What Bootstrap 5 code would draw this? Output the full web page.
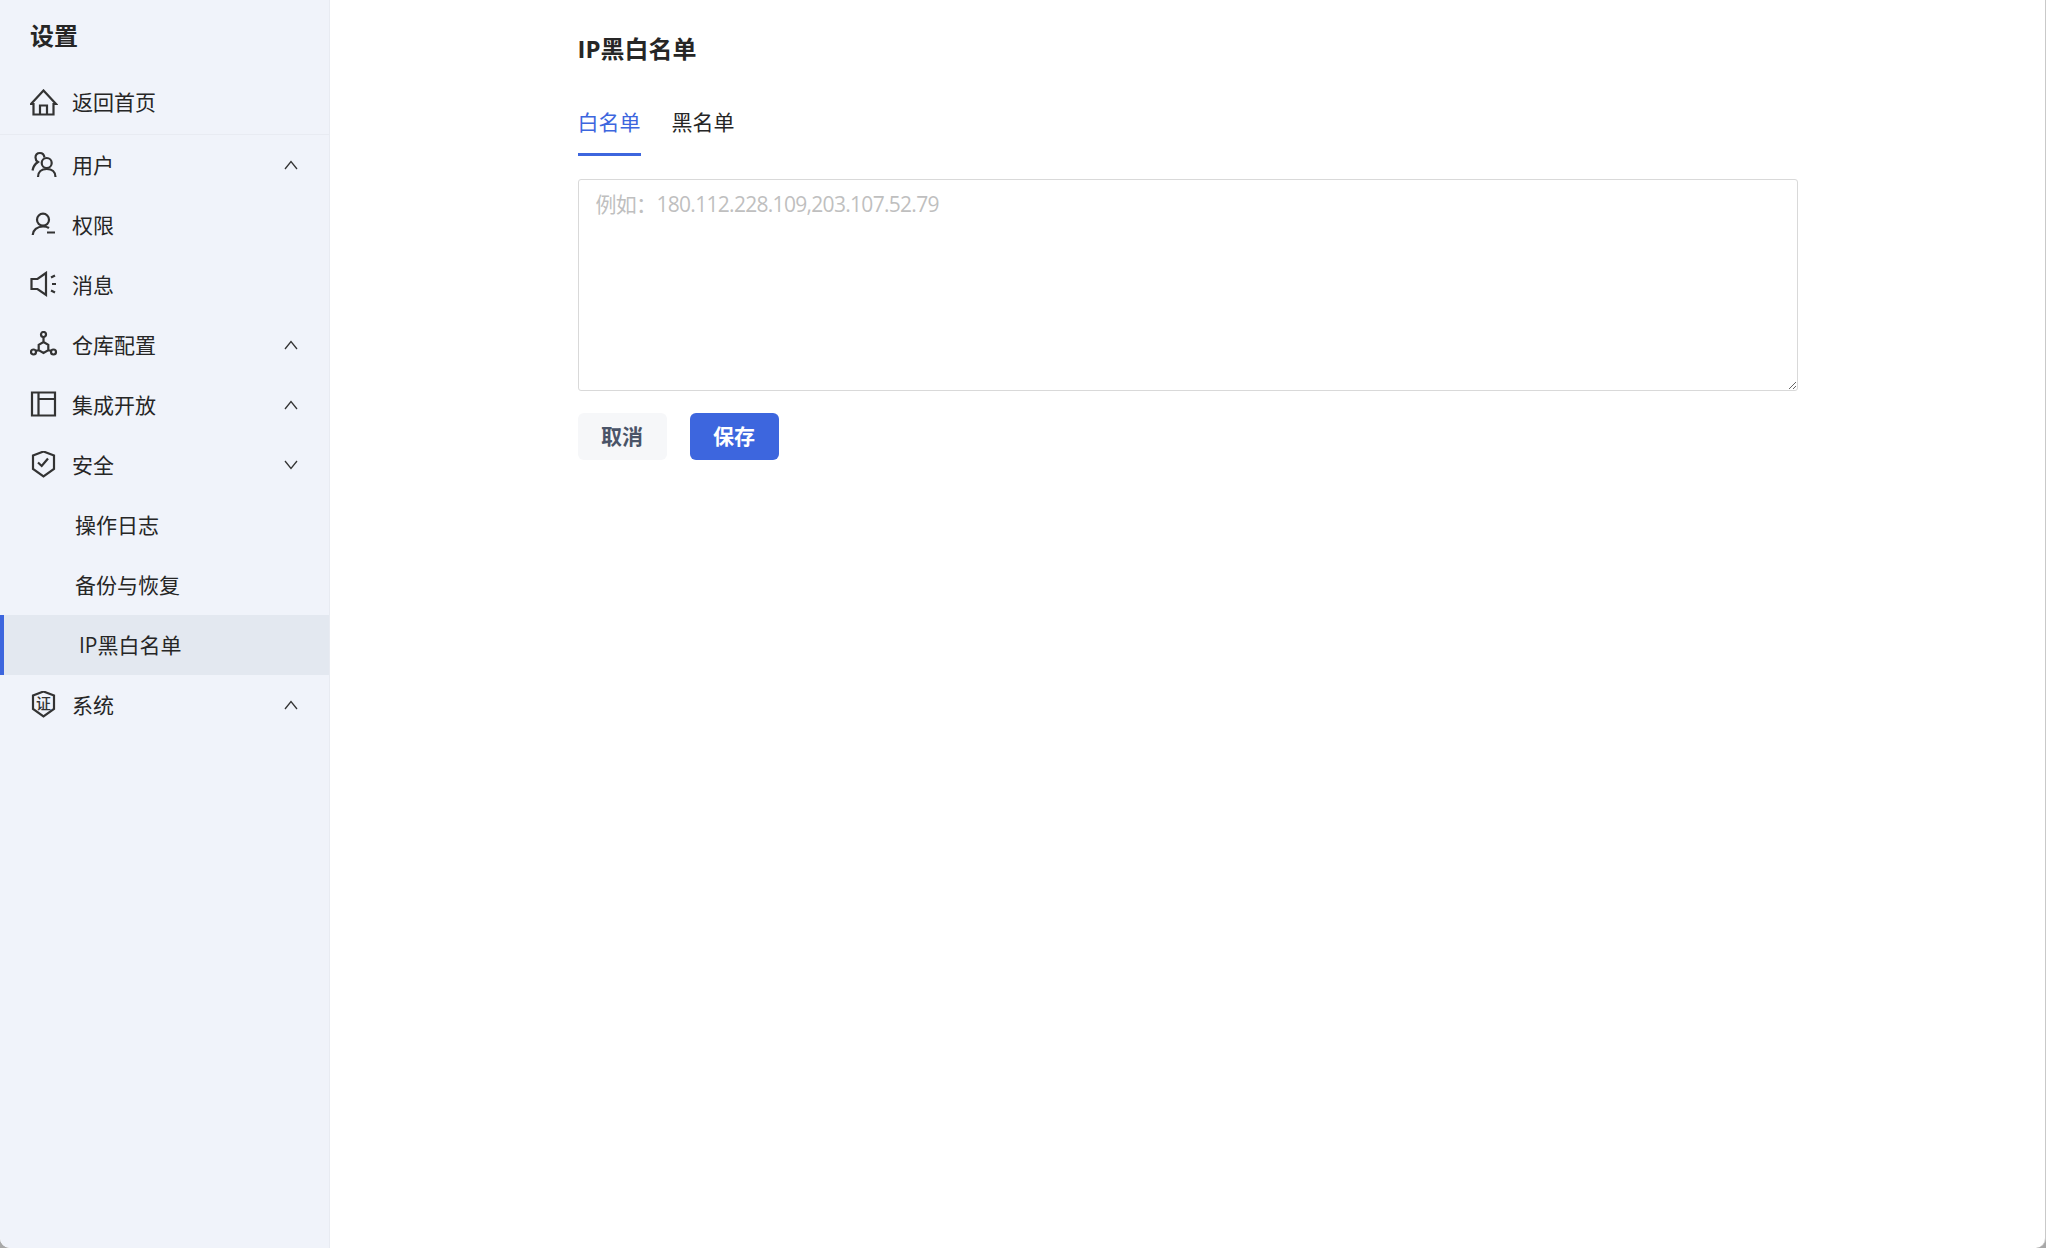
<!DOCTYPE html>
<html lang="zh-CN">
<head>
<meta charset="utf-8">
<title>IP黑白名单</title>
<link href="https://cdn.jsdelivr.net/npm/bootstrap@5.3.0/dist/css/bootstrap.min.css" rel="stylesheet">
<style>
html, body { height: 100%; }
body { background: #a8a8a8; color: #262626; font-family: "Open Sans", "Noto Sans CJK SC", sans-serif; font-size: 21px; overflow: hidden; }
.app-frame { height: 1248px; background: #fff; border-radius: 0 0 10px 10px; overflow: hidden; border-right: 1px solid #c9c9c9; }
.side-pane { width: 330px; background: #f0f3fa; border-right: 1px solid #e8ebf2; flex: none; }
.side-title { font-size: 24px; font-weight: 700; padding: 19px 30px 0; height: 71px; line-height: 34px; }
.side-row { height: 60px; padding-left: 30px; padding-right: 31px; color: #262626; text-decoration: none; gap: 14px; line-height: 1; }
.side-row:hover { color: #262626; }
.side-home { height: 64px; padding-bottom: 0; border-bottom: 1px solid #e8ebf2; }
.side-sub { padding-left: 75px; }
.side-active { background: #e3e8f0; border-left: 4px solid #3d66de; padding-left: 75px; }
.side-icon { width: 28px; height: 28px; flex: none; fill: none; stroke: #333; stroke-width: 2.2; }
.side-icon text { fill: #333; stroke: none; font-size: 15px; font-weight: 500; font-family: "Noto Sans CJK SC", sans-serif; }
.side-chev { width: 14px; height: 10px; flex: none; fill: none; stroke: #333; stroke-width: 1.3; margin-left: auto; margin-top: 0; }
.body-pane { width: 1220px; }
.page-head { font-size: 24px; font-weight: 700; line-height: 34px; margin: 32px 0 0; color: #262626; }
.tab-strip { gap: 31px; margin-top: 31px; }
.tab-item { display: block; padding: 0; height: 59px; line-height: 50px; color: #262626; text-decoration: none; }
.tab-item:hover { color: #262626; }
.tab-item.active, .tab-item.active:hover { color: #3d66de; border-bottom: 3px solid #3d66de; }
.ip-box.form-control { display: block; height: 212px; margin-top: 23px; padding: 8.5px 17px; border: 1.5px solid #d9d9d9; border-radius: 3px; font-size: 21px; color: #262626; box-shadow: none; }
.ip-box.form-control::placeholder { color: #bfbfbf; letter-spacing: -.7px; }
.act-row { gap: 23px; margin-top: 22px; }
.act-btn { width: 89px; height: 47px; padding: 0; font-size: 21px; font-weight: 700; border: 0; border-radius: 6px; line-height: 47px; }
.act-cancel, .act-cancel:hover { background: #f6f7f9; color: #4a5468; }
.act-save, .act-save:hover { background: #3d66de; color: #fff; }
</style>
</head>
<body>
<div class="app-frame d-flex">
  <aside class="side-pane d-flex flex-column">
    <div class="side-title">设置</div>
    <a class="side-row side-home d-flex align-items-center" href="#">
      <svg class="side-icon" viewBox="0 0 28 28"><path d="M1 15L13.5 1.5L26 15H23.5V25.5H3.5V15ZM10 25.5V16.5H17V25.5"/></svg>
      <span>返回首页</span>
    </a>
    <a class="side-row d-flex align-items-center" href="#">
      <svg class="side-icon" viewBox="0 0 28 28"><circle cx="16.7" cy="12" r="5"/><path d="M8 26C8 21 11.5 18 16.7 18C22 18 25.5 21 25.5 26M14.5 6.5C14 3.5 12 2 10 2C7 2 5.5 4 5.5 6.5C5.5 8.5 6.5 10 8 11C5 13 3 16 2.5 19.5"/></svg>
      <span>用户</span>
      <svg class="side-chev" viewBox="0 0 14 10"><path d="M1 9L7 1.5L13 9"/></svg>
    </a>
    <a class="side-row d-flex align-items-center" href="#">
      <svg class="side-icon" viewBox="0 0 28 28"><circle cx="13" cy="8.7" r="6"/><path d="M2.7 24C3 19 7 15.5 13 15.5C15.5 15.5 17.5 16 19 17M17 21.5H25"/></svg>
      <span>权限</span>
    </a>
    <a class="side-row d-flex align-items-center" href="#">
      <svg class="side-icon" viewBox="0 0 28 28"><path d="M16 2L7.5 8H1.5V18H7.5L16 24ZM21 6.5L25 4.5M22 13H26M21 19.5L25 21.5"/></svg>
      <span>消息</span>
    </a>
    <a class="side-row d-flex align-items-center" href="#">
      <svg class="side-icon" viewBox="0 0 28 28"><circle cx="13.5" cy="3.5" r="2.5"/><circle cx="3.5" cy="21" r="2.5"/><circle cx="23.5" cy="21" r="2.5"/><path d="M13.5 6V11M13.5 11L18.3 13.8V19.2L13.5 22L8.7 19.2V13.8ZM5.7 19.9L8.7 19.2M21.3 19.9L18.3 19.2"/></svg>
      <span>仓库配置</span>
      <svg class="side-chev" viewBox="0 0 14 10"><path d="M1 9L7 1.5L13 9"/></svg>
    </a>
    <a class="side-row d-flex align-items-center" href="#">
      <svg class="side-icon" viewBox="0 0 28 28"><path d="M2 1.5H25V24.5H2ZM8.5 1.5V24.5M8.5 8H25"/></svg>
      <span>集成开放</span>
      <svg class="side-chev" viewBox="0 0 14 10"><path d="M1 9L7 1.5L13 9"/></svg>
    </a>
    <a class="side-row d-flex align-items-center" href="#">
      <svg class="side-icon" viewBox="0 0 28 28"><path d="M13.5 .5L24 4.5V18L13.5 25.5L3 18V4.5ZM8 11.5L11.7 15L18 7.5"/></svg>
      <span>安全</span>
      <svg class="side-chev" viewBox="0 0 14 10"><path d="M1 1L7 8.5L13 1"/></svg>
    </a>
    <a class="side-row side-sub d-flex align-items-center" href="#"><span>操作日志</span></a>
    <a class="side-row side-sub d-flex align-items-center" href="#"><span>备份与恢复</span></a>
    <a class="side-row side-active d-flex align-items-center" href="#"><span>IP黑白名单</span></a>
    <a class="side-row d-flex align-items-center" href="#">
      <svg class="side-icon" viewBox="0 0 28 28"><path d="M13.5 .5L24 4.5V18L13.5 25.5L3 18V4.5Z"/><text x="13.5" y="18" text-anchor="middle">证</text></svg>
      <span>系统</span>
      <svg class="side-chev" viewBox="0 0 14 10"><path d="M1 9L7 1.5L13 9"/></svg>
    </a>
  </aside>
  <main class="flex-grow-1">
    <div class="body-pane mx-auto">
      <h1 class="page-head">IP黑白名单</h1>
      <nav class="tab-strip nav">
        <a class="tab-item active" href="#">白名单</a>
        <a class="tab-item" href="#">黑名单</a>
      </nav>
      <textarea class="ip-box form-control" placeholder="例如：180.112.228.109,203.107.52.79"></textarea>
      <div class="act-row d-flex">
        <button type="button" class="btn act-btn act-cancel">取消</button>
        <button type="button" class="btn act-btn act-save">保存</button>
      </div>
    </div>
  </main>
</div>
<script src="https://cdn.jsdelivr.net/npm/bootstrap@5.3.0/dist/js/bootstrap.bundle.min.js"></script>
</body>
</html>
